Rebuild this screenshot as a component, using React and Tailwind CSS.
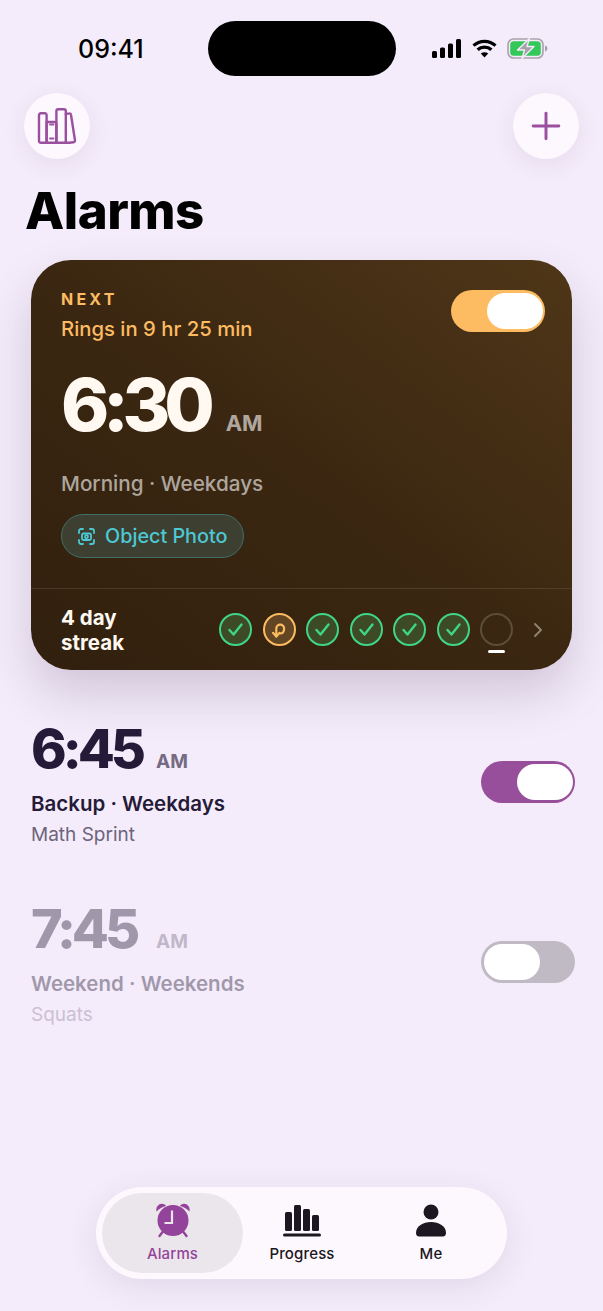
import { Plus } from 'lucide-react';

const font = { fontFamily: 'Inter, "Noto Sans", sans-serif' };

function Signal() {
  return (
    <svg width="30" height="19" viewBox="0 0 30 19" fill="#000">
      <rect x="0" y="12" width="5" height="7" rx="1.5" />
      <rect x="8" y="8.5" width="5" height="10.5" rx="1.5" />
      <rect x="16" y="4.5" width="5" height="14.5" rx="1.5" />
      <rect x="24" y="0" width="5" height="19" rx="1.5" />
    </svg>
  );
}

function Wifi() {
  return (
    <svg width="25" height="19" viewBox="0 0 25 19" fill="none" stroke="#000" strokeWidth="3.2">
      <path d="M1.5 6.6C7.6.9 17.4.9 23.5 6.6" />
      <path d="M5.6 10.8c3.9-3.6 9.9-3.6 13.8 0" />
      <path d="M12.5 18.6l-3.7-4.1c2.1-1.7 5.3-1.7 7.4 0z" fill="#000" stroke="none" />
    </svg>
  );
}

function Battery() {
  return (
    <svg width="41" height="21" viewBox="0 0 41 21" fill="none">
      <rect x="1" y="1" width="35" height="19" rx="5.5" stroke="#a6a2aa" strokeWidth="1.6" />
      <rect x="3.2" y="3.2" width="30.6" height="14.6" rx="3.5" fill="#34c759" />
      <path d="M38 7.5c1.6.4 2.4 1.6 2.4 3s-.8 2.6-2.4 3z" fill="#a6a2aa" />
      <path d="M22.5 0.5 10.5 12h7L15 20.5 27 8.5h-7z" fill="#a6a2aa" stroke="#f4ecfa" strokeWidth="1.4" strokeLinejoin="round" />
    </svg>
  );
}

function Books() {
  return (
    <svg width="40" height="36" viewBox="0 0 40 36" fill="none" stroke="#9a4f9f" strokeWidth="2.4" strokeLinejoin="round" strokeLinecap="round">
      <path d="M2 7a1.800 1.800 0 0 1 1.800-1.800h4A1.800 1.800 0 0 1 9.600 7v27.800H3.800A1.800 1.800 0 0 1 2 33z" />
      <path d="M9.600 14h8a1.800 1.800 0 0 1 1.800 1.800v19H9.600z" />
      <path d="M13 16.500h3.500M13 30.500h3.500" strokeWidth="1.800" />
      <path d="M19.400 3a1.800 1.800 0 0 1 1.800-1.800h5.800A1.800 1.800 0 0 1 28.800 3v31.800h-9.400z" />
      <path d="M28.800 6l3.400-.6a1.500 1.500 0 0 1 1.800 1.300l4 25.800a1.500 1.500 0 0 1-1.300 1.700l-4.700.6h-3.200" />
    </svg>
  );
}

function Check() {
  return (
    <div className="w-[33px] h-[33px] rounded-full border-2 border-[#3fd688] bg-[#3d4a26] flex items-center justify-center">
      <svg width="17" height="15" viewBox="0 0 17 15" fill="none" stroke="#3fd688" strokeWidth="2.400" strokeLinecap="round" strokeLinejoin="round">
        <path d="M2.500 8l4 4.500L14.500 2.500" />
      </svg>
    </div>
  );
}

function Recovered() {
  return (
    <div className="w-[33px] h-[33px] rounded-full border-2 border-[#fdbc61] bg-[#624523] flex items-center justify-center">
      <svg width="18" height="18" viewBox="0 0 18 18" fill="none" stroke="#fdbc61" strokeWidth="2.200" strokeLinecap="round" strokeLinejoin="round">
        <path d="M6.300 15.500V7.500a3.900 3.900 0 0 1 7.800 0c0 3-1.500 5-3.800 5" />
        <path d="M3 11.800l3.300 3.700 3.300-3.700" />
      </svg>
    </div>
  );
}

function Toggle({ on, track }) {
  return (
    <div className={`w-[94px] h-[42px] rounded-full py-[3px] px-[2.500px] flex ${track} ${on ? 'justify-end' : 'justify-start'}`}>
      <div className="w-[56px] h-[36px] rounded-full bg-white" />
    </div>
  );
}

function AlarmRow({ time, title, sub, dim, children }) {
  return (
    <div className="h-[180px] flex items-start justify-between pl-[31px] pr-[28px]">
      <div className={dim ? 'opacity-40' : ''}>
        <div className="flex items-baseline text-[#251a38] h-[66px] pt-[1px]">
          <span className="w-[112px] text-[54px] leading-[64px] font-extrabold tracking-[-0.075em]">{time}</span>
          <span className="ml-[13px] text-[19px] font-bold text-[#756b83]">AM</span>
        </div>
        <div className="mt-[8px] text-[20.5px] leading-[28px] font-semibold text-[#251a38]">{title}</div>
        <div className={`mt-[3px] text-[19px] leading-[28px] ${dim ? 'text-[#8c7fa0]' : 'text-[#6d647a]'}`}>{sub}</div>
      </div>
      <div className="mt-[45px]">{children}</div>
    </div>
  );
}

function TabItem({ label, active, width, children }) {
  return (
    <div className={`${width} h-[80px] flex flex-col items-center justify-start pt-[8px] ${active ? 'rounded-full bg-[#ebe6ec]' : ''}`}>
      <div className="h-[38px] flex items-center justify-center">{children}</div>
      <div className={`mt-[5px] text-[15px] leading-[20px] font-medium tracking-[0.01em] ${active ? 'text-[#94439a]' : 'text-[#1c1720]'}`}>{label}</div>
    </div>
  );
}

export default function App() {
  return (
    <div style={font} className="w-[603px] h-[1311px] bg-[#f4ecfa] flex flex-col overflow-hidden">
      {/* status bar */}
      <div className="h-[93px] flex items-start justify-between shrink-0">
        <div className="w-[208px] pt-[34px] pl-[78px] text-[25px] leading-[30px] font-medium text-black">09:41</div>
        <div className="mt-[21px] w-[188px] h-[55px] rounded-full bg-black" />
        <div className="w-[207px] pt-[38px] pl-[36px] flex items-center gap-[10px]">
          <Signal />
          <Wifi />
          <Battery />
        </div>
      </div>

      {/* top buttons */}
      <div className="flex justify-between px-[24px] shrink-0">
        <button className="w-[66px] h-[66px] rounded-full bg-[#fdf8fe] flex items-center justify-center shadow-[0_6px_24px_rgba(60,30,90,0.08)]">
          <Books />
        </button>
        <button className="w-[66px] h-[66px] rounded-full bg-[#fdf8fe] flex items-center justify-center shadow-[0_6px_24px_rgba(60,30,90,0.08)]">
          <Plus size={44} color="#9a4f9f" strokeWidth={1.6} />
        </button>
      </div>

      <h1 className="ml-[25px] mt-[20px] text-[51px] leading-[64px] font-extrabold text-black tracking-[-0.01em] shrink-0">Alarms</h1>

      {/* next alarm card */}
      <div className="mx-[31px] mt-[17px] w-[541px] h-[410px] shrink-0 rounded-[40px] bg-linear-to-tr from-[#31200e] via-[#3b2711] to-[#4f3618] shadow-[0_24px_48px_rgba(50,30,70,0.18)] flex flex-col">
        <div className="h-[329px] px-[30px] pt-[29px] border-b border-white/10 relative">
          <div className="text-[16px] leading-[20px] font-bold tracking-[0.2em] text-[#fdbc61]">NEXT</div>
          <div className="mt-[6px] text-[20.3px] leading-[28px] font-medium text-[#fdbc61]">Rings in 9 hr 25 min</div>
          <div className="mt-[20px] flex items-baseline h-[84px]">
            <span className="text-[73px] leading-[84px] font-extrabold tracking-[-0.085em] text-[#fff9f2]">6:30</span>
            <span className="ml-[17px] text-[22px] font-bold text-white/60">AM</span>
          </div>
          <div className="mt-[22px] text-[20.7px] leading-[30px] font-medium text-white/60">Morning · Weekdays</div>
          <div className="mt-[15px] w-[183px] h-[44px] rounded-full bg-[#3d3f30] border border-[#3f6f69] flex items-center pl-[16px] gap-[10px]">
            <svg width="17" height="17" viewBox="0 0 17 17" fill="none" stroke="#4dc8d4" strokeWidth="1.800" strokeLinecap="round">
              <path d="M1 5V3a2 2 0 0 1 2-2h2M12 1h2a2 2 0 0 1 2 2v2M16 12v2a2 2 0 0 1-2 2h-2M5 16H3a2 2 0 0 1-2-2v-2" />
              <rect x="4" y="5.500" width="9" height="6.500" rx="1.500" />
              <circle cx="8.500" cy="8.700" r="1.500" />
            </svg>
            <span className="text-[19.8px] leading-[28px] font-medium text-[#4dc8d4]">Object Photo</span>
          </div>
          <div className="absolute right-[27px] top-[30px]">
            <Toggle on track="bg-[#fdbc61]" />
          </div>
        </div>
        <div className="flex-1 flex items-center pl-[30px]">
          <div className="w-[158px] text-[20.5px] leading-[25px] font-bold text-[#fff9f2]">4 day<br />streak</div>
          <div className="flex gap-[10.500px]">
            <Check />
            <Recovered />
            <Check />
            <Check />
            <Check />
            <Check />
            <div className="relative w-[33px] h-[33px] rounded-full border-2 border-[#5d4d3b]">
              <div className="absolute left-[6px] top-[35px] w-[17px] h-[3px] rounded-full bg-white" />
            </div>
          </div>
          <svg className="ml-[20px]" width="10" height="16" viewBox="0 0 10 16" fill="none" stroke="#8d8172" strokeWidth="2" strokeLinecap="round" strokeLinejoin="round">
            <path d="M2 2l6 6-6 6" />
          </svg>
        </div>
      </div>

      {/* other alarms */}
      <div className="mt-[46px] shrink-0">
        <AlarmRow time="6:45" title="Backup · Weekdays" sub="Math Sprint">
          <Toggle on track="bg-[#974f9b]" />
        </AlarmRow>
        <AlarmRow time="7:45" title="Weekend · Weekends" sub="Squats" dim>
          <Toggle track="bg-[#bfbac3]" />
        </AlarmRow>
      </div>

      {/* tab bar */}
      <div className="mt-auto mb-[32px] mx-auto w-[411px] h-[92px] shrink-0 rounded-full bg-[#fdf8fe] p-[6px] flex shadow-[0_8px_32px_rgba(60,30,90,0.10)]">
        <TabItem label="Alarms" active width="w-[141px]">
          <svg width="36" height="36" viewBox="0 0 36 36" fill="#94439a">
            <circle cx="18" cy="18.500" r="15.500" />
            <path d="M1.600 9.500C.6 6 2.500 2 7 1.700c2 0 3.500 1 4.200 2.300C7.500 4.800 4.300 6.800 1.600 9.500zM34.400 9.500C35.400 6 33.500 2 29 1.700c-2 0-3.500 1-4.200 2.300 3.700.8 6.900 2.800 9.600 5.500z" />
            <path d="M8 29.500 4.500 34M28 29.500 31.500 34" stroke="#94439a" strokeWidth="2.400" strokeLinecap="round" />
            <path d="M17 8.500v12.500H9.500" fill="none" stroke="#ebe6ec" strokeWidth="2.200" />
          </svg>
        </TabItem>
        <TabItem label="Progress" width="w-[118px]">
          <svg width="38" height="34" viewBox="0 0 38 34" fill="#1c1720">
            <rect x="2" y="9" width="7" height="19" rx="1.500" />
            <rect x="11" y="2" width="7" height="26" rx="1.500" />
            <rect x="20" y="6" width="7" height="22" rx="1.500" />
            <rect x="29" y="12" width="7" height="16" rx="1.500" />
            <rect x="0" y="30.500" width="38" height="3" rx="1.500" />
          </svg>
        </TabItem>
        <TabItem label="Me" width="w-[140px]">
          <svg width="30" height="33" viewBox="0 0 30 33" fill="#1c1720">
            <circle cx="15" cy="8" r="7.500" />
            <path d="M0 29c0-7 7-11 15-11s15 4 15 11c0 2.500-1.500 3.500-3 3.500H3C1.500 32.500 0 31.500 0 29z" />
          </svg>
        </TabItem>
      </div>
    </div>
  );
}
